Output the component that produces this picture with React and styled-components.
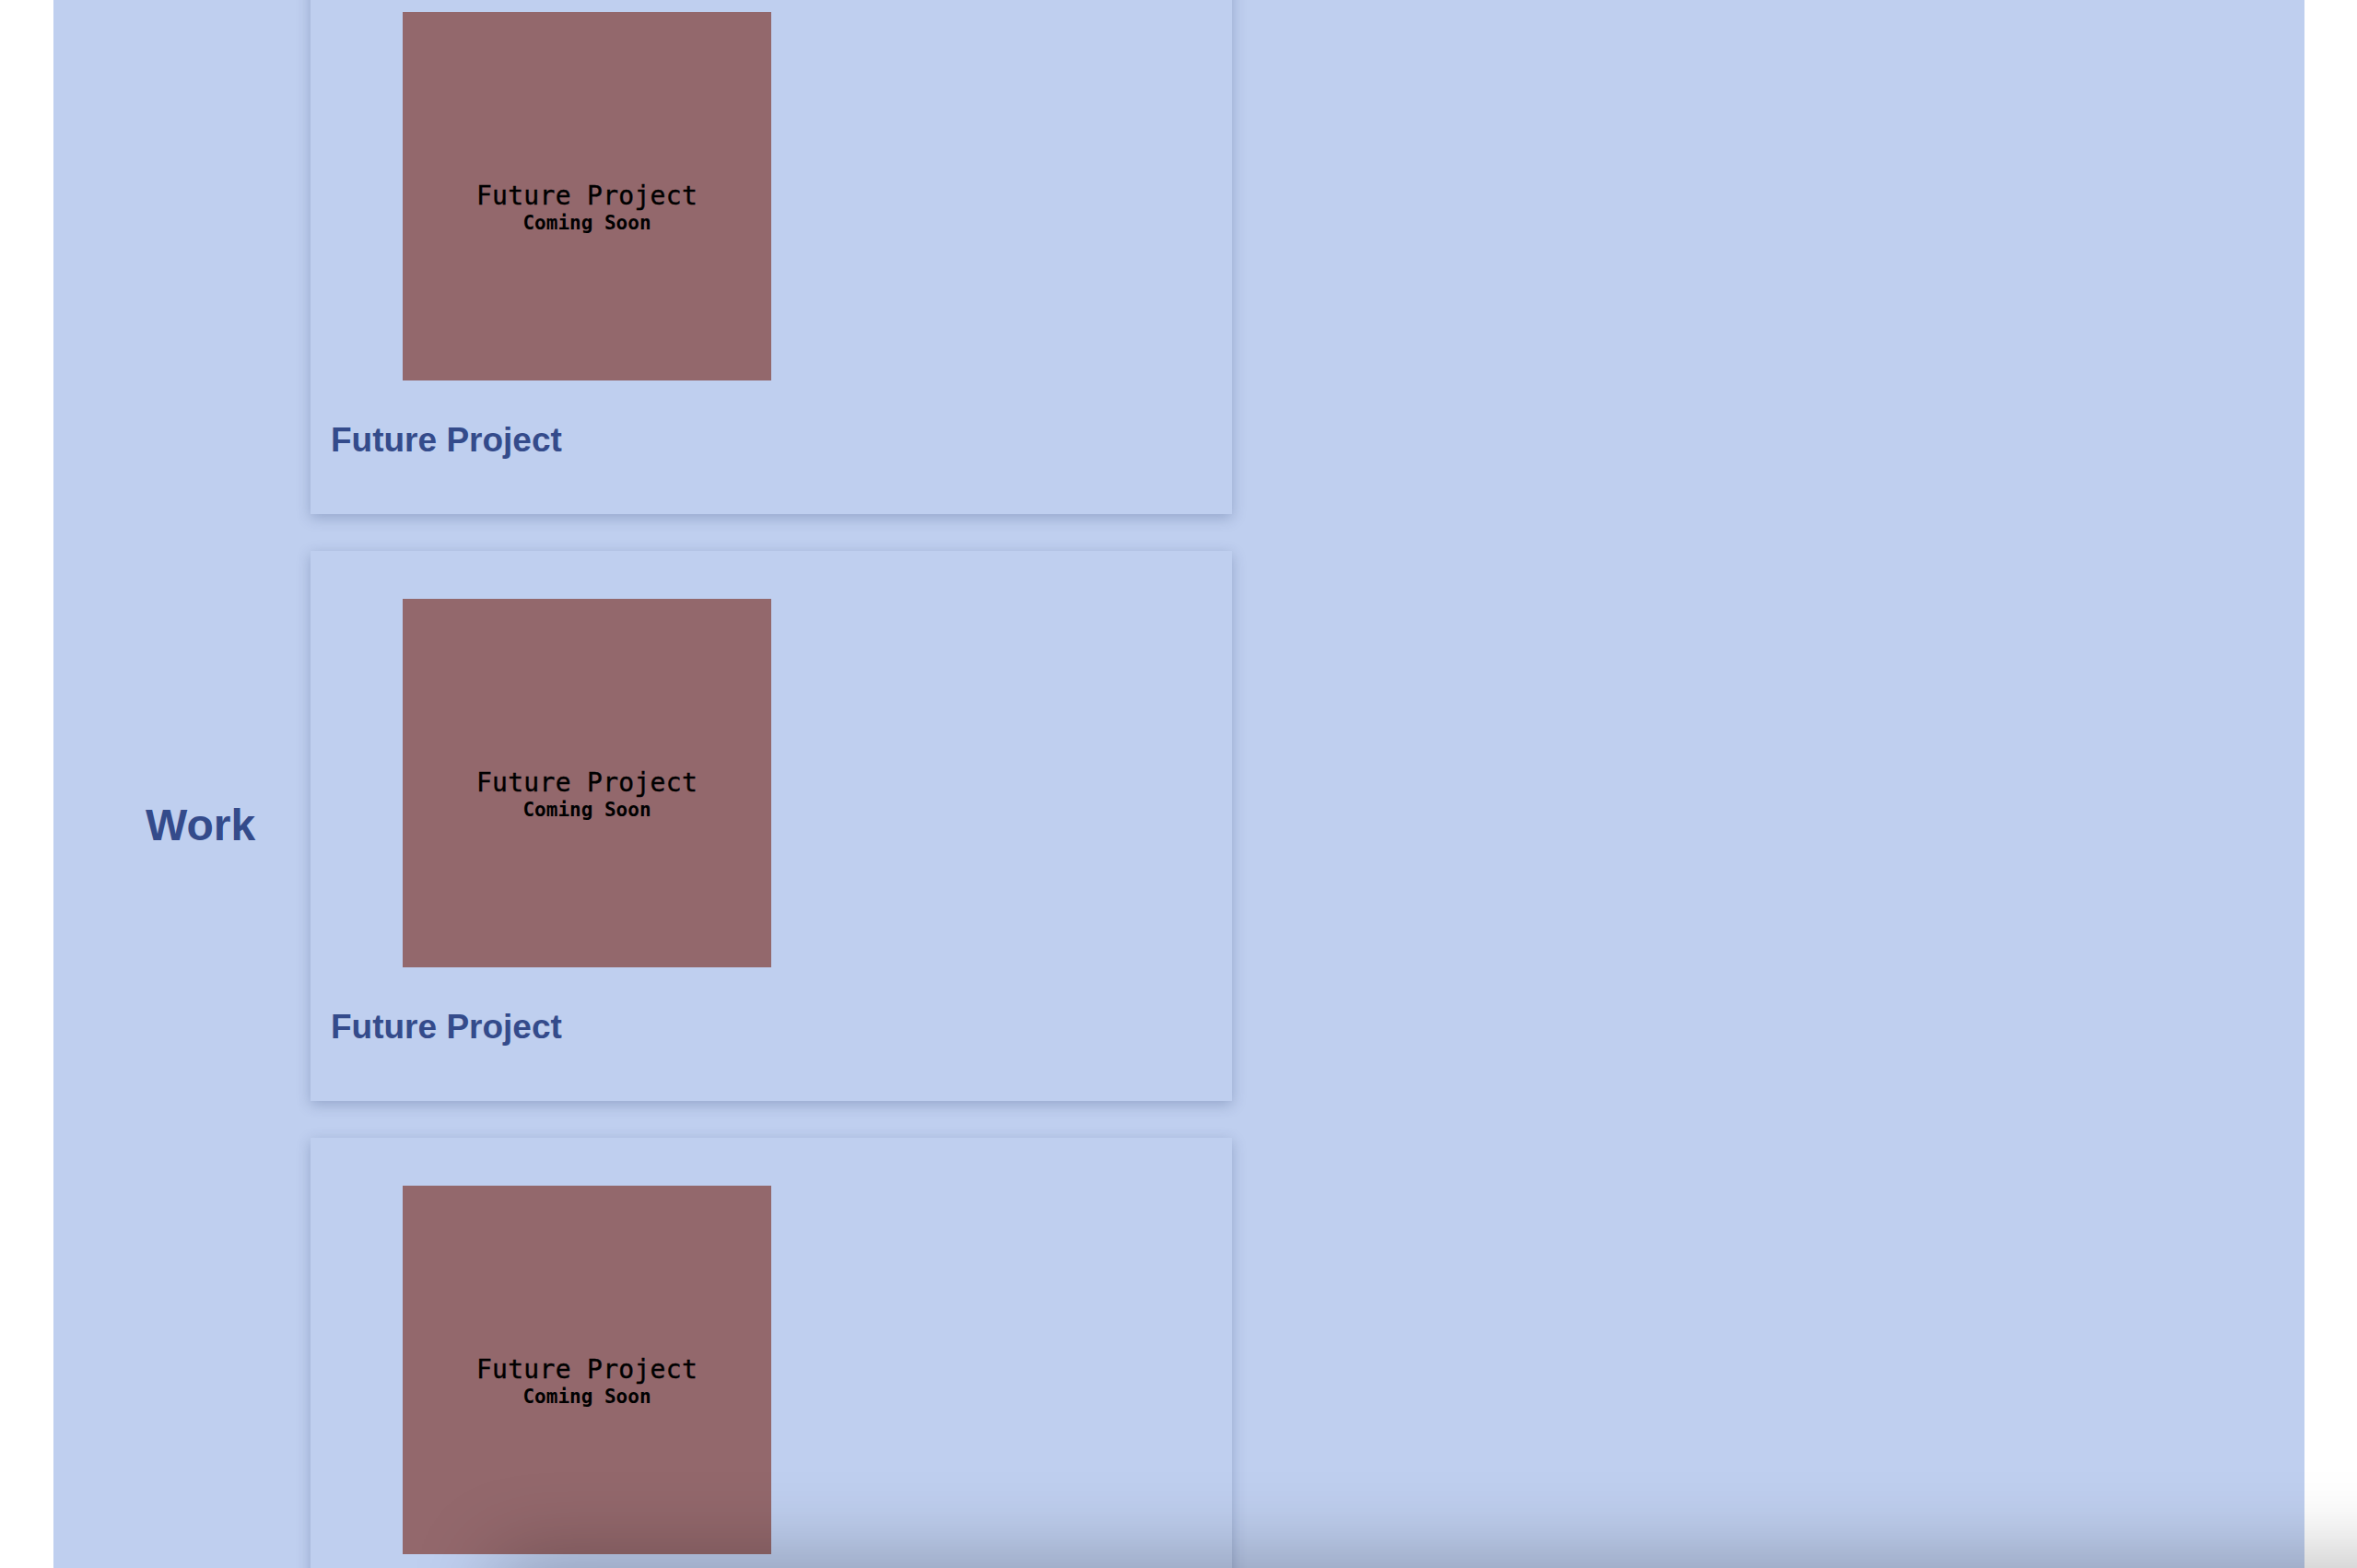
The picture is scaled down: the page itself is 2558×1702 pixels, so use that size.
import React from 'react';
import styled, { createGlobalStyle } from 'styled-components';

const GlobalStyle = createGlobalStyle`
  html, body {
    margin: 0;
    padding: 0;
    background: #ffffff;
    overflow: hidden;
  }
  body {
    font-family: "Liberation Sans", Arial, sans-serif;
  }
`;

const Page = styled.main`
  margin: 0 57px 0 58px;
  background: #bfcfef;
  min-height: 100vh;
`;

const Section = styled.section`
  display: grid;
  grid-template-columns: 279px 1000px;
  align-items: center;
  margin-top: -39px;
`;

const SectionLabel = styled.h2`
  margin: 0 0 2px;
  padding-left: 100px;
  font-size: 48px;
  font-weight: 700;
  color: #344b8b;
`;

const CardList = styled.div`
  display: flex;
  flex-direction: column;
  gap: 40px;
`;

const Card = styled.article`
  background: #bfcfef;
  box-shadow: 0 4px 14px rgba(40, 60, 110, 0.28);
  padding: 52px 20px 62px 22px;
  height: 597px;
  box-sizing: border-box;
`;

const Thumb = styled.div`
  width: 400px;
  height: 400px;
  margin-left: 78px;
  background: #93686c;
  display: flex;
  flex-direction: column;
  align-items: center;
  justify-content: center;
  padding-top: 26px;
  box-sizing: border-box;
  color: #000;
  font-family: "DejaVu Sans Mono", "Liberation Mono", monospace;
`;

const ThumbTitle = styled.div`
  font-size: 28px;
  line-height: 32px;
  letter-spacing: 0.3px;
  -webkit-text-stroke: 0.4px #000;
`;

const ThumbSub = styled.div`
  font-size: 21px;
  line-height: 26px;
  font-weight: ${(p) => (p.$bold ? 700 : 400)};
`;

const CardTitle = styled.h3`
  margin: 44px 0 0;
  font-size: 37px;
  font-weight: 700;
  color: #344b8b;
`;

const BottomShade = styled.div`
  position: fixed;
  left: 540px;
  right: -200px;
  bottom: -160px;
  height: 160px;
  box-shadow: 0 -10px 90px rgba(0, 0, 0, 0.26);
  pointer-events: none;
  z-index: 10;
`;

const projects = [
  { id: 1, name: 'Future Project' },
  { id: 2, name: 'Future Project' },
  { id: 3, name: 'Future Project' },
];

export default function App() {
  return (
    <>
      <GlobalStyle />
      <Page>
        <Section>
          <SectionLabel>Work</SectionLabel>
          <CardList>
            {projects.map((p) => (
              <Card key={p.id}>
                <Thumb>
                  <ThumbTitle>{p.name}</ThumbTitle>
                  <ThumbSub $bold>Coming Soon</ThumbSub>
                </Thumb>
                <CardTitle>{p.name}</CardTitle>
              </Card>
            ))}
          </CardList>
        </Section>
      </Page>
      <BottomShade />
    </>
  );
}
